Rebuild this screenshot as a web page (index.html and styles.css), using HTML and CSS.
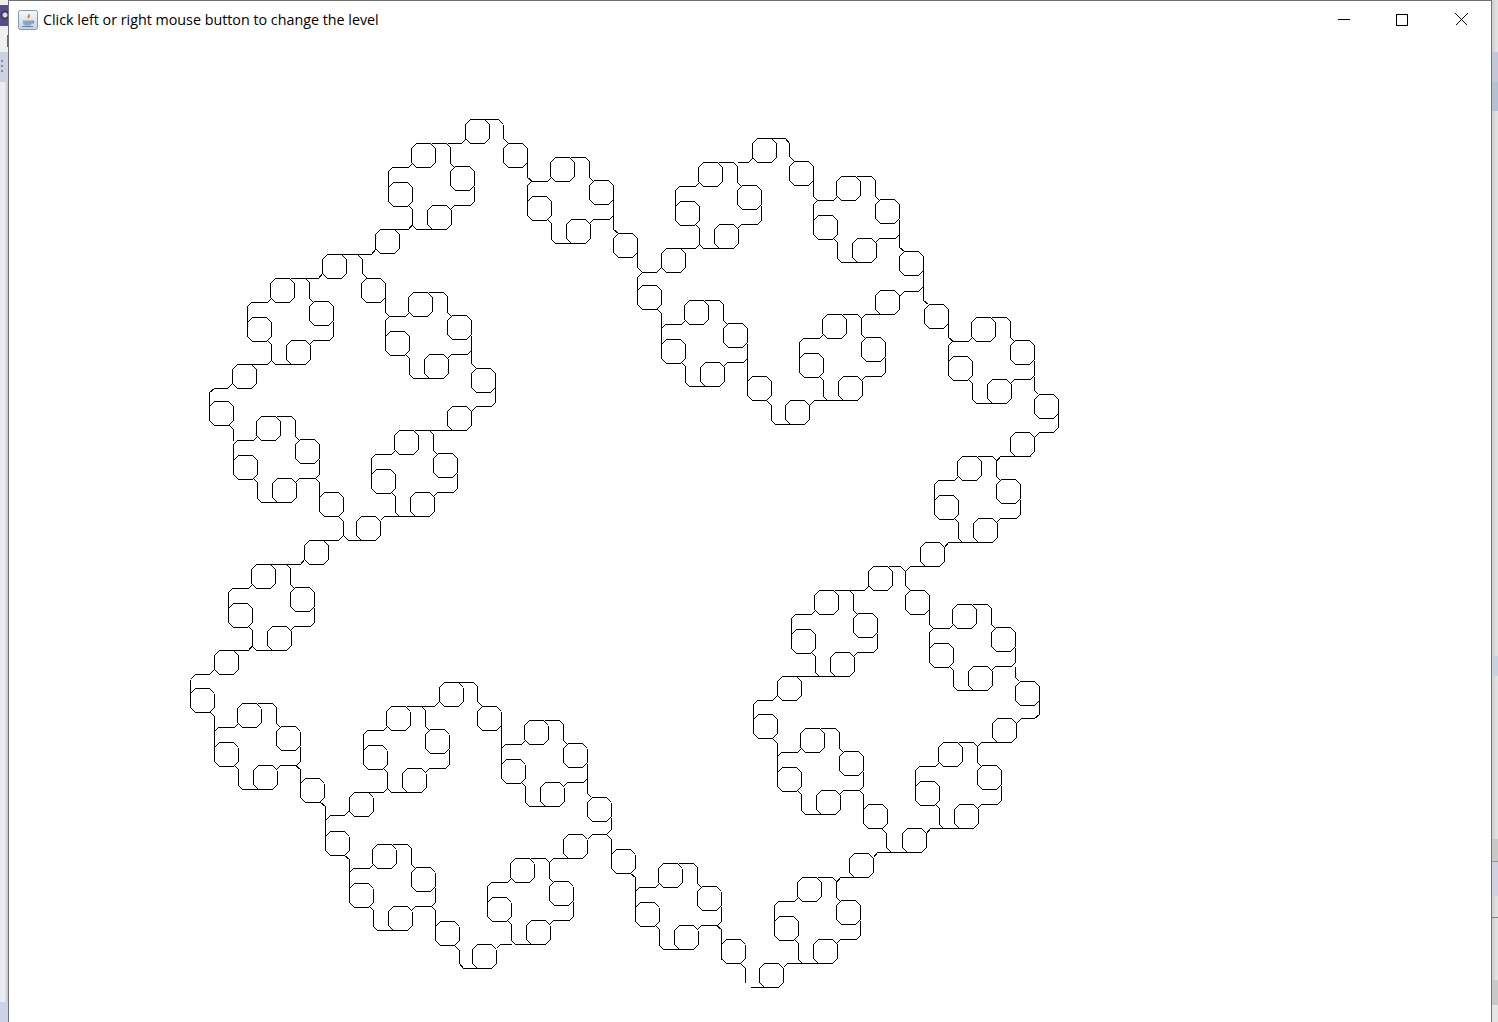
FILE: index.html
```html
<!DOCTYPE html>
<html lang="en">
<head>
  <meta charset="UTF-8" />
  <title>Click left or right mouse button to change the level</title>
  <link rel="stylesheet" href="styles.css">
</head>
<body>
  <div class="strip strip-left">
    <div class="band band-icon"></div>
    <div class="band band-pale"></div>
    <div class="band band-tan"></div>
    <div class="band band-gap"></div>
    <div class="band band-dots"><i></i><i></i><i></i></div>
    <div class="band band-side"></div>
    <div class="band band-bottom"></div>
  </div>
  <div class="window">
    <div class="titlebar">
      <svg class="app-icon" width="20" height="20" viewBox="0 0 20 20">
        <defs>
          <linearGradient id="iconBg" x1="0" y1="0" x2="0" y2="1">
            <stop offset="0" stop-color="#f6f8fa"/>
            <stop offset="1" stop-color="#c5d3e0"/>
          </linearGradient>
        </defs>
        <rect x="0.5" y="0.5" width="19" height="19" rx="2" fill="url(#iconBg)" stroke="#7f98ad"/>
        <path d="M10.5 3c1 1.6-2 2.6-1 4.6.3.6.7 1 1 1.4-.1-1.2 2.4-2.3 1.4-4-.3-.7-.9-1.400-1.400-2z" fill="#e8862a"/>
        <path d="M5 10.500h9v2.500c0 1.500-1.500 2.500-3 2.500H8c-1.500 0-3-1-3-2.500z" fill="#8aa6bf"/>
        <path d="M14 11h1.500v2H14M4 16.500h11" fill="none" stroke="#5f7f9c"/>
      </svg>
      <span class="title">Click left or right mouse button to change the level</span>
      <div class="controls">
        <button class="ctl">
          <svg width="12" height="12" viewBox="0 0 12 12"><path d="M0 5.500h12" stroke="#000" fill="none"/></svg>
        </button>
        <button class="ctl ctl-max">
          <svg width="12" height="12" viewBox="0 0 12 12"><rect x="0.5" y="0.5" width="11" height="11" stroke="#000" fill="none"/></svg>
        </button>
        <button class="ctl">
          <svg width="13" height="13" viewBox="0 0 13 13"><path d="M0.500 0.500l12 12M12.500 0.500l-12 12" stroke="#000" fill="none"/></svg>
        </button>
      </div>
    </div>
    <svg class="canvas" id="canvas" viewBox="9 38 1482 984">
      <path class="curve" id="curve" d=""/>
    </svg>
  </div>
  <div class="strip strip-right">
    <div class="band r-a"></div>
    <div class="band r-b"></div>
    <div class="band r-c"></div>
    <div class="band r-d"></div>
    <div class="band r-e"></div>
    <div class="band r-f"></div>
    <div class="band r-g"></div>
    <div class="band r-h"></div>
    <div class="band r-i"></div>
    <div class="band r-j"></div>
    <div class="band r-k"></div>
  </div>
  <script src="fractal.js"></script>
</body>
</html>
```

FILE: styles.css
```css
* { box-sizing: border-box; }
html, body { margin: 0; padding: 0; height: 100%; overflow: hidden; }
body { display: flex; width: 1498px; height: 1022px; background: #e4e4e4; font-family: "Open Sans", "Noto Sans", "Liberation Sans", sans-serif; }

.strip { display: flex; flex-direction: column; flex: none; }
.strip-left { width: 8px; background: #e7e9f0; }
.strip-right { width: 6px; background: linear-gradient(to right, #cfcfcf, #e6e6e6); }
.band { flex: none; }

.band-icon { height: 26px; background: radial-gradient(circle at 5px 10px, #d8d8dc 0, #d8d8dc 2px, #3d3a58 3px, #3d3a58 4px, #5a4a8c 5px); border-top: 5px solid #efefef; }
.band-pale { height: 9px; background: #f0f0f0; }
.band-tan { height: 12px; background: linear-gradient(to right, #f0f0f0 85%, #7a6a48 85%); }
.band-gap { height: 5px; background: #f0f0f0; }
.band-dots { height: 30px; background: #ccd2e2; display: flex; flex-direction: column; gap: 3px; padding: 8px 0 0 1px; }
.band-dots i { display: block; width: 2px; height: 2px; background: #8d8d80; }
.band-side { height: 920px; background: linear-gradient(to right, #e9ebf2 30%, #f2f3f7 40%, #dcdcdc 75%, #c4c4c4); }
.band-bottom { flex: 1; background: #cdd3e6; }

.r-a { height: 52px; }
.r-b { height: 30px; background: #c3c7da; }
.r-c { height: 29px; background: #b4c1d2; }
.r-d { height: 545px; }
.r-e { height: 20px; background: #cad2e2; }
.r-f { height: 163px; }
.r-g { height: 22px; background: #c9c9c9; }
.r-h { height: 35px; background: #cfd1de; border-top: 1px solid #8e90a6; }
.r-i { height: 22px; border-bottom: 1px solid #808080; }
.r-j { height: 62px; }
.r-k { flex: 1; background: linear-gradient(#c9c9c9 60%, #e6e6e6 60%); }

.window { display: flex; flex-direction: column; flex: 1; min-width: 0; background: #fff; border: 1px solid #6f6f6f; border-bottom: none; }
.titlebar { display: flex; align-items: center; flex: none; height: 37px; padding-left: 9px; background: #fff; }
.app-icon { flex: none; margin-right: 5px; }
.title { font-size: 14.3px; color: #000; white-space: nowrap; }
.controls { display: flex; margin-left: auto; height: 100%; }
.ctl { display: flex; align-items: center; justify-content: center; width: 59px; padding: 0; border: none; background: none; }
.ctl-max { padding-right: 2px; }
.ctl svg { display: block; shape-rendering: crispEdges; }

.canvas { display: block; flex: 1; width: 100%; min-height: 0; }
.curve { fill: none; stroke: #000; stroke-width: 1; shape-rendering: crispEdges; }
```

FILE: fractal.js
```js
// one side of the closed curve, the other three are the same thing turned by 90 degrees
const center = [624, 553];

const clusters = [[817, 920], [820, 771], [834, 633], [972, 647], [958, 785], [977, 499]];

const octagons = [
  [771, 975], [861, 865], [914, 840], [875, 816], [765, 726], [789, 688],
  [880, 578], [917, 602], [932, 554], [1022, 444], [1027, 693], [1004, 730]
];

const links = [
  [[750, 987], [767, 987]],
  [[783, 967], [787, 963], [801, 963]],
  [[836, 882], [840, 877], [866, 877]],
  [[873, 857], [877, 852], [921, 852]],
  [[881, 828], [886, 833], [886, 847], [891, 852]],
  [[859, 790], [863, 794], [863, 812]],
  [[772, 738], [777, 743], [777, 771]],
  [[753, 730], [753, 704], [757, 700], [772, 700], [777, 695]],
  [[789, 676], [820, 676]],
  [[849, 590], [864, 590], [868, 586]],
  [[888, 566], [900, 566], [905, 571], [905, 585], [910, 590]],
  [[905, 571], [910, 566], [938, 566]],
  [[944, 547], [948, 542], [990, 542]],
  [[996, 461], [1000, 456], [1030, 456]],
  [[1034, 437], [1039, 432], [1053, 432]],
  [[929, 600], [929, 624], [933, 628]],
  [[1015, 666], [1015, 677], [1019, 681]],
  [[1039, 700], [1039, 714], [1034, 718], [1021, 718], [1016, 723]],
  [[1004, 742], [981, 742], [977, 746]],
  [[926, 833], [930, 828], [950, 828]]
];

// the corner where one side meets the next, the last side stops short of it
const corner = [[1053, 432], [1058, 427]];

const clusterTail = [[0, -43], [15, -43], [19, -39], [19, -23], [23, -19]];

function octagon(cx, cy) {
  return [
    [cx - 7, cy - 12], [cx + 7, cy - 12], [cx + 12, cy - 7], [cx + 12, cy + 7],
    [cx + 7, cy + 12], [cx - 7, cy + 12], [cx - 12, cy + 7], [cx - 12, cy - 7],
    [cx - 7, cy - 12]
  ];
}

function turn(p, times) {
  let [x, y] = [p[0] - center[0], p[1] - center[1]];
  for (let i = 0; i < times; i++) [x, y] = [y, -x];
  return [x + center[0], y + center[1]];
}

function toPath(points) {
  return 'M' + points.map(p => (p[0] + 0.5) + ' ' + (p[1] + 0.5)).join('L');
}

function sidePieces(hasCorner) {
  const pieces = links.slice();
  octagons.forEach(o => pieces.push(octagon(o[0], o[1])));
  clusters.forEach(c => {
    let oct = [-8, -31];
    let tail = clusterTail;
    for (let i = 0; i < 4; i++) {
      pieces.push(octagon(c[0] + oct[0], c[1] + oct[1]));
      pieces.push(tail.map(p => [c[0] + p[0], c[1] + p[1]]));
      oct = [-oct[1], oct[0]];
      tail = tail.map(p => [-p[1], p[0]]);
    }
  });
  if (hasCorner) pieces.push(corner);
  return pieces;
}

let d = '';
for (let side = 0; side < 4; side++) {
  sidePieces(side < 3).forEach(piece => {
    d += toPath(piece.map(p => turn(p, side)));
  });
}
document.getElementById('curve').setAttribute('d', d);
```
